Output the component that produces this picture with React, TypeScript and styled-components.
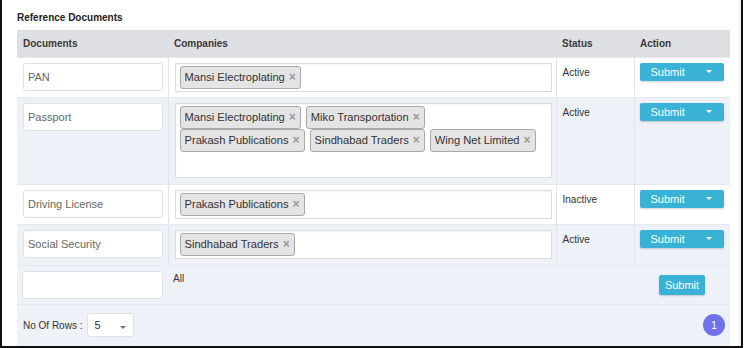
import React from 'react';
import styled, { createGlobalStyle } from 'styled-components';

const GlobalStyle = createGlobalStyle`
  body {
    margin: 0;
    font-family: "Liberation Sans", Arial, sans-serif;
    background: #ffffff;
    color: #333;
  }
  * { box-sizing: border-box; }
`;

type Doc = {
  name: string;
  companies: string[];
  status: string;
  extra?: number;
};

const docs: Doc[] = [
  { name: 'PAN', companies: ['Mansi Electroplating'], status: 'Active' },
  {
    name: 'Passport',
    companies: ['Mansi Electroplating', 'Miko Transportation', 'Prakash Publications', 'Sindhabad Traders', 'Wing Net Limited'],
    status: 'Active',
    extra: 1,
  },
  { name: 'Driving License', companies: ['Prakash Publications'], status: 'Inactive' },
  { name: 'Social Security', companies: ['Sindhabad Traders'], status: 'Active', extra: 1 },
];

const App: React.FC = () => {
  return (
    <>
      <GlobalStyle />
      <Frame>
        <Panel>
          <Title>Reference Documents</Title>
          <Table>
            <colgroup>
              <col style={{ width: 151 }} />
              <col style={{ width: 388 }} />
              <col style={{ width: 78 }} />
              <col style={{ width: 96 }} />
            </colgroup>
            <thead>
              <tr>
                <HeadCell>Documents</HeadCell>
                <HeadCell>Companies</HeadCell>
                <HeadCell>Status</HeadCell>
                <HeadCell>Action</HeadCell>
              </tr>
            </thead>
            <tbody>
              {docs.map((doc, i) => (
                <Row key={doc.name} $striped={i % 2 === 1}>
                  <Cell $extra={doc.extra}>
                    <DocInput readOnly value={doc.name} />
                  </Cell>
                  <Cell $divided $extra={doc.extra}>
                    <TagBox>
                      {doc.companies.map((c) => (
                        <Tag key={c}>
                          {c}
                          <TagRemove>×</TagRemove>
                        </Tag>
                      ))}
                      <SearchField />
                    </TagBox>
                  </Cell>
                  <StatusCell $divided>{doc.status}</StatusCell>
                  <ActionCell $divided>
                    <SplitButton type="button">
                      Submit
                      <Caret $color="#ffffff" />
                    </SplitButton>
                  </ActionCell>
                </Row>
              ))}
              <Row $striped>
                <NewCell>
                  <NewInput />
                </NewCell>
                <AllCell colSpan={2}>All</AllCell>
                <SubmitCell>
                  <SubmitButton type="button">Submit</SubmitButton>
                </SubmitCell>
              </Row>
              <Row $striped>
                <FooterCell colSpan={4}>
                  <Footer>
                    <RowsPicker>
                      No Of Rows :
                      <RowsSelect>
                        5
                        <Caret $color="#777777" />
                      </RowsSelect>
                    </RowsPicker>
                    <PageBubble>1</PageBubble>
                  </Footer>
                </FooterCell>
              </Row>
            </tbody>
          </Table>
        </Panel>
      </Frame>
    </>
  );
};

const Frame = styled.div`
  width: 743px;
  height: 348px;
  border-left: 2px solid #111;
  border-right: 2px solid #111;
  border-bottom: 2px solid #111;
  background: #ffffff;
`;

const Panel = styled.div`
  height: 100%;
  padding: 12px 0 0 15px;
  border-right: 2px solid #eef0f5;
`;

const Title = styled.div`
  font-size: 10px;
  line-height: 12px;
  font-weight: bold;
  color: #222;
  margin-bottom: 6px;
`;

const Table = styled.table`
  width: 713px;
  border-collapse: collapse;
  table-layout: fixed;
`;

const HeadCell = styled.th`
  height: 27px;
  padding: 0 6px;
  background: #dedfe3;
  text-align: left;
  font-size: 10px;
  font-weight: bold;
  color: #3a3a3a;
`;

const Row = styled.tr<{ $striped?: boolean }>`
  background: ${({ $striped }) => ($striped ? '#eef1f8' : '#ffffff')};
  border-top: 1px solid #e6e8ee;
`;

const Cell = styled.td<{ $divided?: boolean; $extra?: number }>`
  vertical-align: top;
  padding: 5px 5px ${({ $extra }) => 5 + ($extra ?? 0)}px 6px;
  border-left: ${({ $divided }) => ($divided ? '1px solid #e3e4e8' : 'none')};
`;

const StatusCell = styled(Cell)`
  padding-top: 9px;
  font-size: 10px;
  color: #333;
`;

const ActionCell = styled(Cell)`
  padding-left: 5px;
`;

const DocInput = styled.input`
  display: block;
  width: 140px;
  height: 28px;
  padding: 0 4px;
  border: 1px solid #e0e1e4;
  border-radius: 3px;
  background: #ffffff;
  font-family: inherit;
  font-size: 11px;
  color: #666;
  outline: none;
`;

const TagBox = styled.div`
  display: flex;
  flex-wrap: wrap;
  align-items: flex-start;
  width: 377px;
  padding: 2px 4px 2px 4px;
  border: 1px solid #dcdcdc;
  background: #ffffff;
  box-shadow: inset 0 1px 2px rgba(0, 0, 0, 0.04);
`;

const Tag = styled.span`
  display: inline-flex;
  align-items: center;
  height: 23px;
  margin-right: 5px;
  padding: 0 4px 0 4px;
  border: 1px solid #aaaaaa;
  border-radius: 3px;
  background: #e4e4e4;
  font-size: 11.15px;
  color: #333;
  white-space: nowrap;
`;

const TagRemove = styled.span`
  margin-left: 4px;
  font-size: 12px;
  line-height: 1;
  font-weight: bold;
  color: #999;
`;

const SearchField = styled.span`
  flex: 1;
  min-width: 40px;
  height: 23px;
`;

const SplitButton = styled.button`
  display: flex;
  align-items: center;
  justify-content: space-between;
  width: 84px;
  height: 18px;
  padding: 0 12px 0 11px;
  border: none;
  border-radius: 2px;
  background: #39b2d6;
  box-shadow: 0 1px 2px rgba(0, 0, 0, 0.18);
  font-family: inherit;
  font-size: 11px;
  color: #ffffff;
`;

const Caret = styled.span<{ $color: string }>`
  width: 0;
  height: 0;
  border-left: 3px solid transparent;
  border-right: 3px solid transparent;
  border-top: 3px solid ${({ $color }) => $color};
`;

const NewCell = styled.td`
  padding: 5px 5px 5px 5px;
  vertical-align: top;
`;

const NewInput = styled.div`
  width: 141px;
  height: 28px;
  border: 1px solid #e0e1e4;
  border-radius: 3px;
  background: #ffffff;
`;

const AllCell = styled.td`
  vertical-align: top;
  padding: 7px 5px 0 5px;
  font-size: 10px;
  color: #333;
`;

const SubmitCell = styled.td`
  vertical-align: top;
  padding-top: 9px;
  text-align: center;
`;

const SubmitButton = styled.button`
  width: 46px;
  height: 20px;
  padding: 0;
  border: none;
  border-radius: 2px;
  background: #39b2d6;
  box-shadow: 0 1px 2px rgba(0, 0, 0, 0.18);
  font-family: inherit;
  font-size: 11px;
  color: #ffffff;
`;

const FooterCell = styled.td`
  height: 42px;
  padding: 0 5px 0 6px;
`;

const Footer = styled.div`
  display: flex;
  align-items: center;
  justify-content: space-between;
`;

const RowsPicker = styled.div`
  display: flex;
  align-items: center;
  gap: 5px;
  font-size: 10px;
  color: #333;
`;

const RowsSelect = styled.div`
  display: flex;
  align-items: center;
  justify-content: space-between;
  width: 47px;
  height: 24px;
  padding: 0 7px 0 6px;
  border: 1px solid #e0e1e4;
  border-radius: 3px;
  background: #ffffff;
  font-size: 11px;
  color: #333;

  ${Caret} {
    margin-top: 5px;
  }
`;

const PageBubble = styled.div`
  display: flex;
  align-items: center;
  justify-content: center;
  width: 22px;
  height: 22px;
  border-radius: 50%;
  background: #6f72ec;
  font-size: 10px;
  color: #ffffff;
`;

export default App;
